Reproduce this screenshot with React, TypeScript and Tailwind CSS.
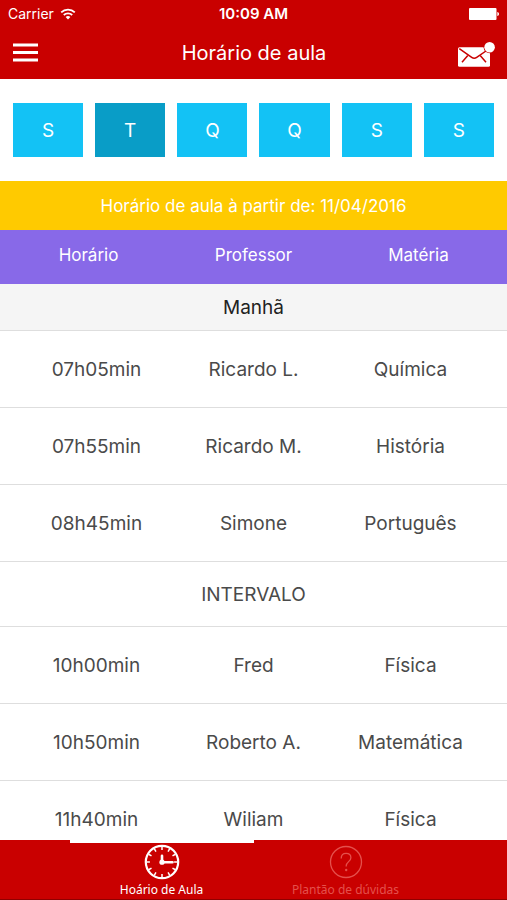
import React, { useState } from "react";

const DAYS = [
  { id: "seg", letter: "S", name: "Segunda" },
  { id: "ter", letter: "T", name: "Terça" },
  { id: "qua", letter: "Q", name: "Quarta" },
  { id: "qui", letter: "Q", name: "Quinta" },
  { id: "sex", letter: "S", name: "Sexta" },
  { id: "sab", letter: "S", name: "Sábado" },
];

const BEFORE_BREAK = [
  { time: "07h05min", teacher: "Ricardo L.", subject: "Química" },
  { time: "07h55min", teacher: "Ricardo M.", subject: "História" },
  { time: "08h45min", teacher: "Simone", subject: "Português" },
];

const AFTER_BREAK = [
  { time: "10h00min", teacher: "Fred", subject: "Física" },
  { time: "10h50min", teacher: "Roberto A.", subject: "Matemática" },
  { time: "11h40min", teacher: "Wiliam", subject: "Física" },
];

const TICKS = [0, 30, 60, 90, 120, 150, 180, 210, 240, 270, 300, 330];

function WifiIcon() {
  return (
    <svg viewBox="0 0 16 12" className="w-4 h-3" fill="none" stroke="currentColor" strokeWidth="1.8" aria-hidden="true">
      <path d="M1.2 4.4a9.6 9.6 0 0 1 13.6 0" />
      <path d="M3.8 7a6 6 0 0 1 8.4 0" />
      <path d="M8 11.6 5.6 9.1a3.4 3.4 0 0 1 4.8 0z" fill="currentColor" stroke="none" />
    </svg>
  );
}

function BatteryIcon() {
  return (
    <svg viewBox="0 0 30 12" className="w-[30px] h-3" fill="currentColor" aria-hidden="true">
      <rect x="0" y="0" width="27.5" height="12" rx="1" />
      <path d="M28.3 4c1.2.3 1.7 1.1 1.7 2s-.5 1.7-1.7 2z" />
    </svg>
  );
}

function MenuIcon() {
  return (
    <svg viewBox="0 0 25 20" className="w-[25px] h-5" fill="currentColor" aria-hidden="true">
      <rect x="0" y="0.5" width="25" height="3" />
      <rect x="0" y="8" width="25" height="3" />
      <rect x="0" y="15.5" width="25" height="3" />
    </svg>
  );
}

function MailIcon() {
  return (
    <svg viewBox="0 0 38 28" className="w-[38px] h-7" aria-hidden="true">
      <rect x="1" y="8.3" width="32" height="19.4" rx="1.5" fill="#fff" />
      <g fill="none" stroke="#c90000" strokeWidth="1.5">
        <path d="M2.3 9.7l12.4 8.6c1.6 1.1 3.4 1.1 5 0L29.7 11.5" />
        <path d="M10.8 16.6 5 23.2M23.2 16.6l5.8 6.6" />
      </g>
      <circle cx="32.6" cy="8.2" r="6" fill="#c90000" />
      <circle cx="32.6" cy="8.2" r="5.3" fill="#fff" />
    </svg>
  );
}

function ClockIcon() {
  return (
    <svg viewBox="0 0 36 36" className="w-9 h-9" fill="none" stroke="currentColor" aria-hidden="true">
      <circle cx="18" cy="18" r="16.2" strokeWidth="2.2" />
      {TICKS.map((angle) => (
        <path key={angle} d="M18 2.5v3.4" strokeWidth="1.5" transform={`rotate(${angle} 18 18)`} />
      ))}
      <path d="M18 11.8v6.4M18 18.2h10.5" strokeWidth="2.6" strokeLinecap="round" />
      <circle cx="18" cy="18.2" r="2.6" fill="currentColor" stroke="none" />
    </svg>
  );
}

function QuestionIcon() {
  return (
    <svg viewBox="0 0 36 36" className="w-9 h-9" fill="none" stroke="currentColor" aria-hidden="true">
      <circle cx="18" cy="18" r="15.5" strokeWidth="1.3" />
      <path d="M13.2 14.4c0-3.2 2-5 4.9-5 2.8 0 4.8 1.7 4.8 4.3 0 3.9-4.7 4-4.7 8.2v.6" strokeWidth="1.3" />
      <circle cx="18.2" cy="26" r="1.2" fill="currentColor" stroke="none" />
    </svg>
  );
}

const TABS = [
  { id: "schedule", label: "Hoário de Aula", icon: ClockIcon },
  { id: "help", label: "Plantão de dúvidas", icon: QuestionIcon },
];

function LessonRow({ lesson }: { lesson: (typeof BEFORE_BREAK)[number] }) {
  return (
    <tr className="grid grid-cols-3 px-[18px] pt-0.5 h-[77px] items-center border-b border-[#dedede]">
      <td>{lesson.time}</td>
      <td>{lesson.teacher}</td>
      <td>{lesson.subject}</td>
    </tr>
  );
}

export default function App() {
  const [day, setDay] = useState("ter");
  const [tab, setTab] = useState("schedule");

  return (
    <div className="h-screen flex flex-col bg-white font-['Inter',sans-serif]">
      <header className="shrink-0 bg-[#c90000] text-white">
        {/* Status bar */}
        <div className="grid grid-cols-3 items-center h-[27px] px-2 text-sm">
          <div className="flex items-center gap-1.5">
            <span>Carrier</span>
            <WifiIcon />
          </div>
          <span className="text-center text-[15px] font-semibold">10:09 AM</span>
          <div className="flex justify-end">
            <BatteryIcon />
          </div>
        </div>

        {/* Title bar */}
        <div className="flex items-center justify-between h-[52px] pl-[13px] pr-3">
          <button type="button" aria-label="Menu" className="flex w-[38px]">
            <MenuIcon />
          </button>
          <h1 className="text-xl">Horário de aula</h1>
          <button type="button" aria-label="Mensagens" className="flex">
            <MailIcon />
          </button>
        </div>
      </header>

      <main className="flex-1 min-h-0 overflow-y-auto [scrollbar-width:none]">
        {/* Week days */}
        <div className="grid grid-cols-6 gap-3 px-[13px] py-6">
          {DAYS.map((item) => (
            <button
              key={item.id}
              type="button"
              aria-label={item.name}
              aria-pressed={day === item.id}
              onClick={() => setDay(item.id)}
              className={`h-[54px] pt-0.5 text-[19px] text-white ${day === item.id ? "bg-[#099dc7]" : "bg-[#13c2f5]"}`}
            >
              {item.letter}
            </button>
          ))}
        </div>

        <p className="flex items-center justify-center h-[49px] pt-0.5 bg-[#ffca00] text-[17px] text-white">
          Horário de aula à partir de: 11/04/2016
        </p>

        <table className="block w-full text-center text-[19px] text-[#4a4a4a]">
          <thead className="block">
            <tr className="grid grid-cols-3 px-1.5 pt-[13px] h-[54px] bg-[#8869e8] text-[17px] leading-6 text-white">
              <th className="font-normal">Horário</th>
              <th className="font-normal">Professor</th>
              <th className="font-normal">Matéria</th>
            </tr>
          </thead>
          <tbody className="block">
            <tr className="grid pt-0.5 h-[47px] items-center bg-[#f5f5f5] border-b border-[#dedede] text-[#222222]">
              <th colSpan={3} className="font-normal">Manhã</th>
            </tr>
            {BEFORE_BREAK.map((lesson) => (
              <LessonRow key={lesson.time} lesson={lesson} />
            ))}
            <tr className="grid pt-0.5 h-[65px] items-center border-b border-[#dedede]">
              <td colSpan={3}>INTERVALO</td>
            </tr>
            {AFTER_BREAK.map((lesson) => (
              <LessonRow key={lesson.time} lesson={lesson} />
            ))}
          </tbody>
        </table>
      </main>

      <nav className="shrink-0 flex justify-center h-[60px] bg-[#c90000] border-b border-[#8f0000]">
        {TABS.map((item) => (
          <button
            key={item.id}
            type="button"
            onClick={() => setTab(item.id)}
            className={`w-46 flex flex-col items-center gap-0.5 pt-px border-t-3 font-['Noto_Sans',sans-serif] text-xs ${
              tab === item.id ? "border-white text-white" : "border-transparent text-[#e4504c]"
            }`}
          >
            <item.icon />
            <span>{item.label}</span>
          </button>
        ))}
      </nav>
    </div>
  );
}
